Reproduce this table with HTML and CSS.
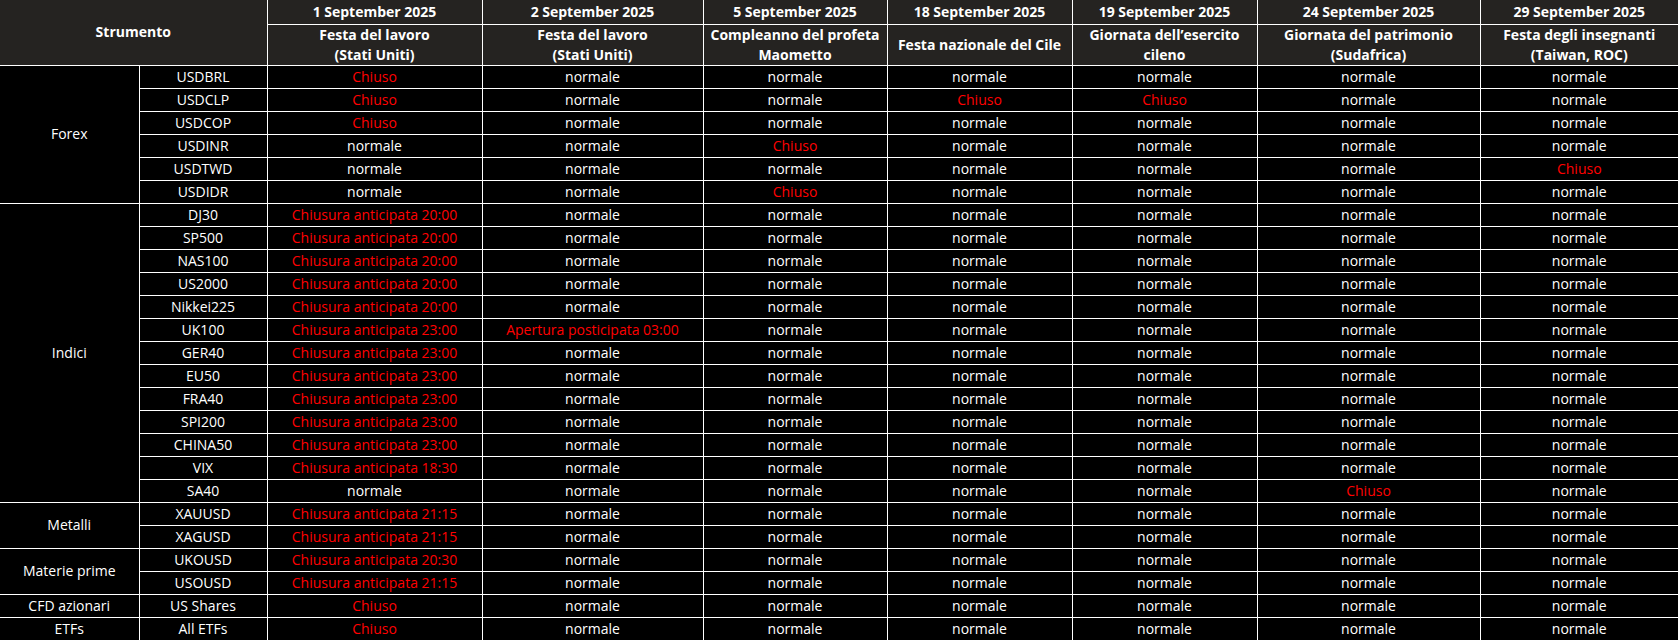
FILE: index.html
```html
<!DOCTYPE html>
<html lang="it">
<head>
<meta charset="utf-8">
<title>Orari festività settembre 2025</title>
<link rel="stylesheet" href="styles.css">
</head>
<body>
<table class="sched">
<colgroup>
<col class="c-grp"><col class="c-sym"><col class="c1"><col class="c2"><col class="c3"><col class="c4"><col class="c5"><col class="c6"><col class="c7">
</colgroup>
<thead>
<tr class="h1">
<th colspan="2" rowspan="2">Strumento</th>
<th>1 September 2025</th>
<th>2 September 2025</th>
<th>5 September 2025</th>
<th>18 September 2025</th>
<th>19 September 2025</th>
<th>24 September 2025</th>
<th>29 September 2025</th>
</tr>
<tr class="h2">
<th>Festa del lavoro<br>(Stati Uniti)</th>
<th>Festa del lavoro<br>(Stati Uniti)</th>
<th>Compleanno del profeta<br>Maometto</th>
<th>Festa nazionale del Cile</th>
<th>Giornata dell’esercito<br>cileno</th>
<th>Giornata del patrimonio<br>(Sudafrica)</th>
<th>Festa degli insegnanti<br>(Taiwan, ROC)</th>
</tr>
</thead>
<tbody>
<tr><td rowspan="6">Forex</td><td>USDBRL</td><td class="red">Chiuso</td><td>normale</td><td>normale</td><td>normale</td><td>normale</td><td>normale</td><td>normale</td></tr>
<tr><td>USDCLP</td><td class="red">Chiuso</td><td>normale</td><td>normale</td><td class="red">Chiuso</td><td class="red">Chiuso</td><td>normale</td><td>normale</td></tr>
<tr><td>USDCOP</td><td class="red">Chiuso</td><td>normale</td><td>normale</td><td>normale</td><td>normale</td><td>normale</td><td>normale</td></tr>
<tr><td>USDINR</td><td>normale</td><td>normale</td><td class="red">Chiuso</td><td>normale</td><td>normale</td><td>normale</td><td>normale</td></tr>
<tr><td>USDTWD</td><td>normale</td><td>normale</td><td>normale</td><td>normale</td><td>normale</td><td>normale</td><td class="red">Chiuso</td></tr>
<tr><td>USDIDR</td><td>normale</td><td>normale</td><td class="red">Chiuso</td><td>normale</td><td>normale</td><td>normale</td><td>normale</td></tr>

<tr><td rowspan="13">Indici</td><td>DJ30</td><td class="red">Chiusura anticipata 20:00</td><td>normale</td><td>normale</td><td>normale</td><td>normale</td><td>normale</td><td>normale</td></tr>
<tr><td>SP500</td><td class="red">Chiusura anticipata 20:00</td><td>normale</td><td>normale</td><td>normale</td><td>normale</td><td>normale</td><td>normale</td></tr>
<tr><td>NAS100</td><td class="red">Chiusura anticipata 20:00</td><td>normale</td><td>normale</td><td>normale</td><td>normale</td><td>normale</td><td>normale</td></tr>
<tr><td>US2000</td><td class="red">Chiusura anticipata 20:00</td><td>normale</td><td>normale</td><td>normale</td><td>normale</td><td>normale</td><td>normale</td></tr>
<tr><td>Nikkei225</td><td class="red">Chiusura anticipata 20:00</td><td>normale</td><td>normale</td><td>normale</td><td>normale</td><td>normale</td><td>normale</td></tr>
<tr><td>UK100</td><td class="red">Chiusura anticipata 23:00</td><td class="red">Apertura posticipata 03:00</td><td>normale</td><td>normale</td><td>normale</td><td>normale</td><td>normale</td></tr>
<tr><td>GER40</td><td class="red">Chiusura anticipata 23:00</td><td>normale</td><td>normale</td><td>normale</td><td>normale</td><td>normale</td><td>normale</td></tr>
<tr><td>EU50</td><td class="red">Chiusura anticipata 23:00</td><td>normale</td><td>normale</td><td>normale</td><td>normale</td><td>normale</td><td>normale</td></tr>
<tr><td>FRA40</td><td class="red">Chiusura anticipata 23:00</td><td>normale</td><td>normale</td><td>normale</td><td>normale</td><td>normale</td><td>normale</td></tr>
<tr><td>SPI200</td><td class="red">Chiusura anticipata 23:00</td><td>normale</td><td>normale</td><td>normale</td><td>normale</td><td>normale</td><td>normale</td></tr>
<tr><td>CHINA50</td><td class="red">Chiusura anticipata 23:00</td><td>normale</td><td>normale</td><td>normale</td><td>normale</td><td>normale</td><td>normale</td></tr>
<tr><td>VIX</td><td class="red">Chiusura anticipata 18:30</td><td>normale</td><td>normale</td><td>normale</td><td>normale</td><td>normale</td><td>normale</td></tr>
<tr><td>SA40</td><td>normale</td><td>normale</td><td>normale</td><td>normale</td><td>normale</td><td class="red">Chiuso</td><td>normale</td></tr>

<tr><td rowspan="2">Metalli</td><td>XAUUSD</td><td class="red">Chiusura anticipata 21:15</td><td>normale</td><td>normale</td><td>normale</td><td>normale</td><td>normale</td><td>normale</td></tr>
<tr><td>XAGUSD</td><td class="red">Chiusura anticipata 21:15</td><td>normale</td><td>normale</td><td>normale</td><td>normale</td><td>normale</td><td>normale</td></tr>

<tr><td rowspan="2">Materie prime</td><td>UKOUSD</td><td class="red">Chiusura anticipata 20:30</td><td>normale</td><td>normale</td><td>normale</td><td>normale</td><td>normale</td><td>normale</td></tr>
<tr><td>USOUSD</td><td class="red">Chiusura anticipata 21:15</td><td>normale</td><td>normale</td><td>normale</td><td>normale</td><td>normale</td><td>normale</td></tr>

<tr><td>CFD azionari</td><td>US Shares</td><td class="red">Chiuso</td><td>normale</td><td>normale</td><td>normale</td><td>normale</td><td>normale</td><td>normale</td></tr>
<tr><td>ETFs</td><td>All ETFs</td><td class="red">Chiuso</td><td>normale</td><td>normale</td><td>normale</td><td>normale</td><td>normale</td><td>normale</td></tr>
</tbody>
</table>
</body>
</html>
```

FILE: styles.css
```css
html, body {
  margin: 0;
  padding: 0;
  background: #000;
}

.sched {
  width: 1678px;
  table-layout: fixed;
  border-collapse: collapse;
  border-style: hidden;
  font-family: "Open Sans", "Noto Sans", sans-serif;
  font-size: 14px;
  color: #fff;
  background: #000;
}

.c-grp { width: 139px; }
.c-sym { width: 128px; }
.c1 { width: 215px; }
.c2 { width: 221px; }
.c3 { width: 184px; }
.c4 { width: 185px; }
.c5 { width: 185px; }
.c6 { width: 223px; }
.c7 { width: 198px; }

.sched th,
.sched td {
  border: 1px solid #fff;
  padding: 0;
  text-align: center;
  vertical-align: middle;
  white-space: nowrap;
}

.sched th {
  background: #252321;
  font-weight: 700;
  line-height: 20px;
}

.h1 { height: 24px; }
.h2 { height: 40px; }

.sched td {
  height: 22px;
  line-height: 20px;
}

.sched td.red {
  color: #f00;
}
```
